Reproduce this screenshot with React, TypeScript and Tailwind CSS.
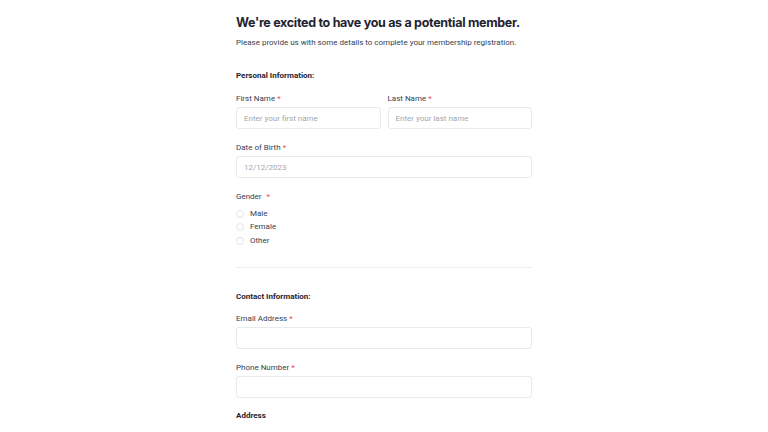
import React from 'react';

function Label({ text, required = true, gap = false }: { text: string; required?: boolean; gap?: boolean }) {
  return (
    <label className="block text-[8px] leading-[12px] text-[#374151]">
      {text}
      {required && <span className={`text-[#ef4444] ${gap ? 'ml-[5px]' : 'ml-[2px]'}`}>*</span>}
    </label>
  );
}

function Input({ placeholder }: { placeholder?: string }) {
  return (
    <input
      type="text"
      placeholder={placeholder}
      className="block w-full h-[22px] rounded-[3px] border border-[#e9eaec] bg-white px-[7px] text-[8px] text-[#374151] placeholder:text-[#a3a7ad] outline-none"
    />
  );
}

function Radio({ label }: { label: string }) {
  return (
    <label className="flex items-center h-[13.5px] gap-[6px] text-[8px] text-[#374151]">
      <span className="w-[8px] h-[8px] rounded-full border border-[#e2e4e7] bg-white" />
      {label}
    </label>
  );
}

export default function App() {
  return (
    <div className="min-h-screen bg-white font-['Roboto',sans-serif]">
      <div className="w-[296px] mx-auto pt-[14px]">
        <h1 className="font-['Inter',sans-serif] font-bold text-[12.5px] leading-[18px] tracking-[-0.3px] whitespace-nowrap text-[#1f2330]">
          We're excited to have you as a potential member.
        </h1>
        <p className="mt-[5px] text-[8px] leading-[12px] text-[#374151]">
          Please provide us with some details to complete your membership registration.
        </p>

        <h2 className="mt-[21px] text-[8px] leading-[12px] font-bold text-[#1f2330]">Personal Information:</h2>

        <div className="mt-[11px] grid grid-cols-2 gap-[7px]">
          <div>
            <Label text="First Name" />
            <div className="mt-[2px]">
              <Input placeholder="Enter your first name" />
            </div>
          </div>
          <div>
            <Label text="Last Name" />
            <div className="mt-[2px]">
              <Input placeholder="Enter your last name" />
            </div>
          </div>
        </div>

        <div className="mt-[13px]">
          <Label text="Date of Birth" />
          <div className="mt-[2px]">
            <Input placeholder="12/12/2023" />
          </div>
        </div>

        <div className="mt-[13px]">
          <Label text="Gender" gap />
          <div className="mt-[4px] flex flex-col">
            <Radio label="Male" />
            <Radio label="Female" />
            <Radio label="Other" />
          </div>
        </div>

        <div className="mt-[19px] border-t border-[#ececee]" />

        <h2 className="mt-[23px] text-[8px] leading-[12px] font-bold text-[#1f2330]">Contact Information:</h2>

        <div className="mt-[10px]">
          <Label text="Email Address" />
          <div className="mt-[2px]">
            <Input />
          </div>
        </div>

        <div className="mt-[13px]">
          <Label text="Phone Number" />
          <div className="mt-[2px]">
            <Input />
          </div>
        </div>

        <h2 className="mt-[12px] text-[8px] leading-[12px] font-bold text-[#1f2330]">Address</h2>
      </div>
    </div>
  );
}
